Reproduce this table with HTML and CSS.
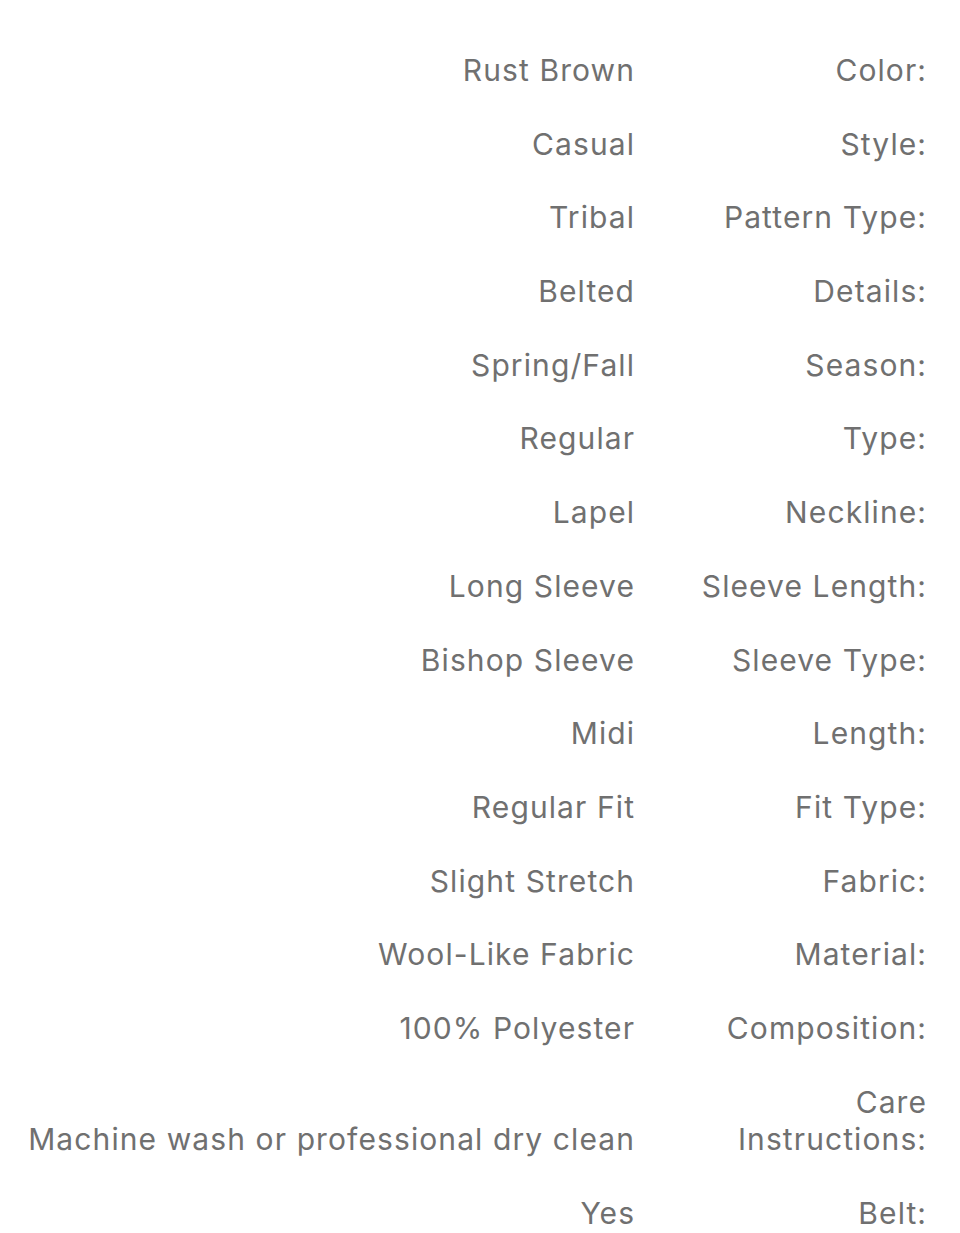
FILE: index.html
```html
<!DOCTYPE html>
<html lang="en">
<head>
<meta charset="utf-8">
<title>Product details</title>
<link rel="stylesheet" href="styles.css">
</head>
<body>
<div class="specs">
  <div class="val">Rust Brown</div><div class="key">Color:</div>
  <div class="val">Casual</div><div class="key">Style:</div>
  <div class="val">Tribal</div><div class="key">Pattern Type:</div>
  <div class="val">Belted</div><div class="key">Details:</div>
  <div class="val">Spring/Fall</div><div class="key">Season:</div>
  <div class="val">Regular</div><div class="key">Type:</div>
  <div class="val">Lapel</div><div class="key">Neckline:</div>
  <div class="val">Long Sleeve</div><div class="key">Sleeve Length:</div>
  <div class="val">Bishop Sleeve</div><div class="key">Sleeve Type:</div>
  <div class="val">Midi</div><div class="key">Length:</div>
  <div class="val">Regular Fit</div><div class="key">Fit Type:</div>
  <div class="val">Slight Stretch</div><div class="key">Fabric:</div>
  <div class="val">Wool-Like Fabric</div><div class="key">Material:</div>
  <div class="val">100% Polyester</div><div class="key">Composition:</div>
  <div class="val">Machine wash or professional dry clean</div><div class="key">Care Instructions:</div>
  <div class="val">Yes</div><div class="key">Belt:</div>
</div>
</body>
</html>
```
FILE: styles.css
```css
html, body {
  margin: 0;
  padding: 0;
  background: #ffffff;
}
body {
  font-family: Inter, "Noto Sans", "Liberation Sans", sans-serif;
  color: #707070;
}
.specs {
  display: grid;
  grid-template-columns: 1fr 240px;
  column-gap: 52px;
  padding: 34px 34px 0 0;
  align-items: end;
}
.val, .key {
  font-size: 30px;
  letter-spacing: 1.1px;
  line-height: 37.5px;
  padding: 18px 0 18.2px;
  text-align: right;
  margin-right: -1.1px;
}
```
